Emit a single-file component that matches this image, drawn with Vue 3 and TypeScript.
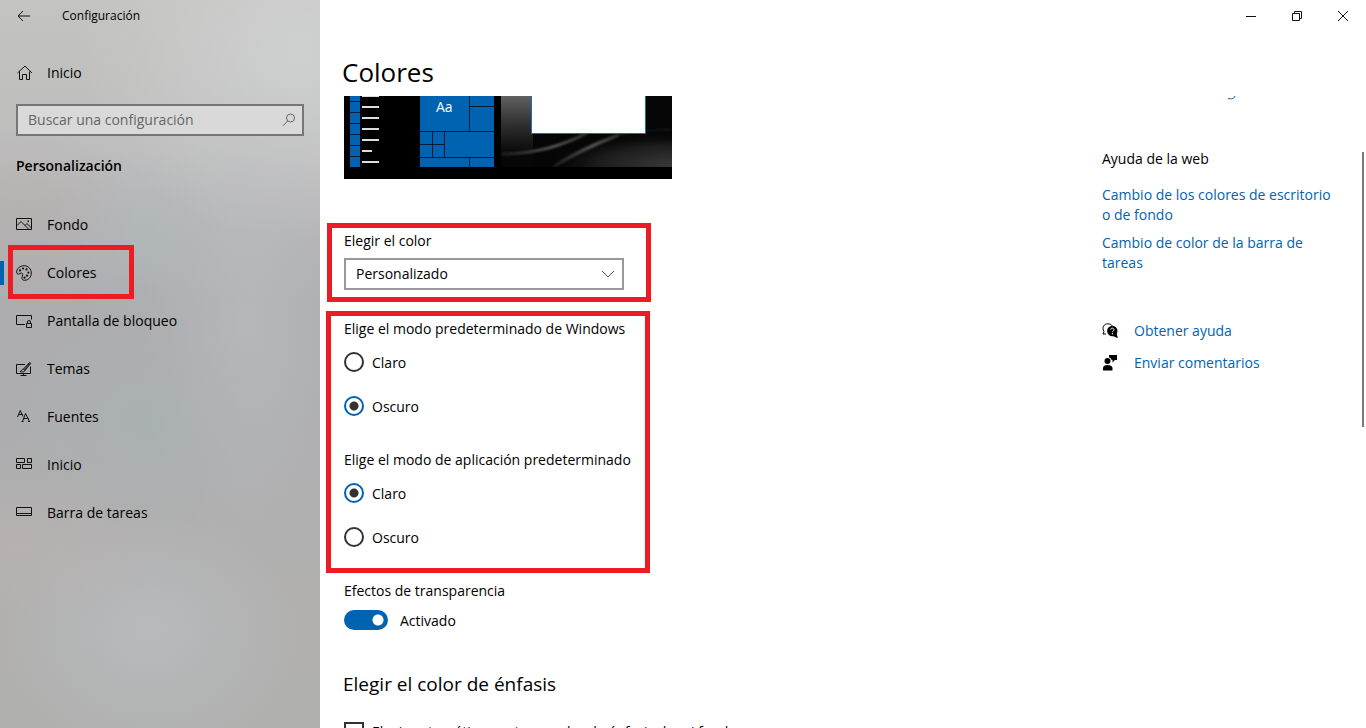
<script setup lang="ts">
import { ref } from 'vue'

interface NavItem {
  id: string
  label: string
}

const navItems: NavItem[] = [
  { id: 'background', label: 'Fondo' },
  { id: 'colors', label: 'Colores' },
  { id: 'lock', label: 'Pantalla de bloqueo' },
  { id: 'themes', label: 'Temas' },
  { id: 'fonts', label: 'Fuentes' },
  { id: 'start', label: 'Inicio' },
  { id: 'taskbar', label: 'Barra de tareas' },
]

const active = ref('colors')
const query = ref('')
const colorMode = ref('Personalizado')
const windowsMode = ref('Oscuro')
const appMode = ref('Claro')
const modes = ['Claro', 'Oscuro']
const transparency = ref(true)
const autoAccent = ref(false)

const taskRows = [5, 16, 27, 38, 49, 60]
const menuLines = [-1, 10, 21, 32, 43, 65]
</script>

<template>
  <div class="window">
    <aside class="sidebar">
      <header class="side-title">
        <button class="back" type="button" aria-label="Atrás">
          <svg width="14" height="12" viewBox="0 0 14 12"><path d="M13 6H1M6 1L1 6l5 5" /></svg>
        </button>
        <span>Configuración</span>
      </header>

      <a class="home" href="#inicio">
        <svg width="16" height="16" viewBox="0 0 16 16">
          <path d="M1.500 8L9 1l7 7M3.500 6.500v8h3v-5h4v5h3v-8" />
        </svg>
        <span>Inicio</span>
      </a>

      <label class="search">
        <input v-model="query" type="text" placeholder="Buscar una configuración" aria-label="Buscar una configuración" />
        <svg width="14" height="14" viewBox="0 0 14 14"><circle cx="8.500" cy="5" r="4" /><path d="M5.600 8L1 12.800" /></svg>
      </label>

      <h2 class="side-heading">Personalización</h2>

      <nav>
        <a
          v-for="item in navItems"
          :key="item.id"
          class="nav-item"
          :class="{ active: active === item.id }"
          :href="'#' + item.id"
          @click.prevent="active = item.id"
        >
          <svg width="16" height="16" viewBox="0 0 16 16">
            <template v-if="item.id === 'background'">
              <path d="M.5 1.500h15v11H.5z" />
              <path d="M1 8.500l4-4 7.500 7.500M9 8.500l2-2 4.500 4.500" />
              <path class="solid" d="M11.500 3.500h1.500V5h-1.500z" />
            </template>
            <template v-else-if="item.id === 'colors'">
              <path d="M8 .7C3.800.7.7 3.600.7 7c0 1.600 1 2.300 2 2.100 1-.2 1.500-1.100 2.500-1.100 1.200 0 1.700 1 1.500 2-.2 1-.8 1.500-.8 2.700 0 1.600 1.100 2.600 2.600 2.600 4 0 6.800-3.300 6.800-7.300S12.200.7 8 .7z" />
              <g class="solid">
                <circle cx="4" cy="5.400" r="1.100" /><circle cx="7" cy="3.500" r="1.100" />
                <circle cx="10.500" cy="4.400" r="1.100" /><circle cx="12.400" cy="7.600" r="1.100" />
                <circle cx="11" cy="10.700" r="1.100" /><circle cx="8.500" cy="12.700" r="1.100" />
              </g>
            </template>
            <template v-else-if="item.id === 'lock'">
              <path d="M9 11.500H.5v-9h15V6.500" />
              <path d="M10.500 10.500h5v4h-5zM11.500 10.500V9a1.500 1.500 0 0 1 3 0v1.500" />
            </template>
            <template v-else-if="item.id === 'themes'">
              <path d="M9 3.500H.5v9h14v-7M7.500 12.500v2M4.500 14.500h6" />
              <path d="M7.500 8L13.700 1.300l1 1L9 9.500zM7.500 8C5.500 8 6 10 4 10.500c2 1 5 .5 5-1.500" />
              <path d="M8.300 8.500l5.500-6.200" />
            </template>
            <template v-else-if="item.id === 'fonts'">
              <path d="M1.500 8L4.300 1.500 7 7.500M2.500 5.500h4" />
              <path d="M6.500 12.500L9.500 4.500l4 8M7.500 9.500h5M5.500 12.500h2M12 12.500h2" />
            </template>
            <template v-else-if="item.id === 'start'">
              <path d="M.5 1.500h8v4h-8zM11.500 1.500h4v4h-4zM.5 7.500h4v4h-4zM6.500 7.500h9v4h-9z" />
            </template>
            <template v-else>
              <path d="M.5 2.500h15v8H.5zM1 8.500h14" />
            </template>
          </svg>
          <span>{{ item.label }}</span>
        </a>
      </nav>
    </aside>

    <main class="main">
      <header class="caption">
        <button type="button" aria-label="Minimizar">
          <svg width="12" height="12" viewBox="0 0 12 12"><path d="M1 6.500h10" /></svg>
        </button>
        <button type="button" aria-label="Restaurar">
          <svg width="12" height="12" viewBox="0 0 12 12"><path d="M1.500 3.500h7v7h-7zM3.500 3.500v-2h7v7h-2" /></svg>
        </button>
        <button type="button" aria-label="Cerrar">
          <svg width="12" height="12" viewBox="0 0 12 12"><path d="M1 1l10 10M11 1L1 11" /></svg>
        </button>
      </header>

      <h1>Colores</h1>

      <div class="body">
        <div class="settings">
          <svg class="preview" width="328" height="83" viewBox="0 0 328 83" role="img" aria-label="Vista previa">
            <defs>
              <linearGradient id="wall" x1="0" y1="0" x2="0" y2="1">
                <stop offset="0" stop-color="#606060" /><stop offset=".4" stop-color="#303030" /><stop offset=".8" stop-color="#080808" />
                <stop offset="1" stop-color="#060606" />
              </linearGradient>
              <radialGradient id="glow" cx="1" cy=".95" r=".9">
                <stop offset="0" stop-color="#383838" /><stop offset=".6" stop-color="#1c1c1c" /><stop offset="1" stop-color="#080808" stop-opacity="0" />
              </radialGradient>
              <linearGradient id="streak" x1="0" y1="0" x2="1" y2="0">
                <stop offset="0" stop-color="#1c1c1c" /><stop offset=".6" stop-color="#5a5a5a" /><stop offset="1" stop-color="#333" />
              </linearGradient>
              <filter id="soft"><feGaussianBlur stdDeviation="1" /></filter>
            </defs>
            <rect width="328" height="83" fill="#000" />
            <rect x="6" width="10" height="71" fill="#0063b1" />
            <path v-for="y in taskRows" :key="'r' + y" :d="`M6 ${y}.5h10`" stroke="#001a33" />
            <rect v-for="y in menuLines" :key="'m' + y" x="18" :y="y" width="17" height="2" fill="#ddd" />
            <rect x="18" y="54" width="10" height="2" fill="#ddd" />
            <rect x="76" width="74" height="71" fill="#0063b1" />
            <path
              d="M125.500 0v35M125 10.500h25M76 35.500h74M88.500 35v26M100.500 35v26M76 48.500h25M76 61.500h74M125.500 61v10"
              stroke="#001a33"
              fill="none"
            />
            <text x="92" y="16" class="sample">Aa</text>
            <rect x="157" width="171" height="71" fill="#050505" />
            <rect x="157" width="32" height="71" fill="url(#wall)" />
            <path d="M189 71V48l70-14h69v37z" fill="url(#glow)" />
            <g fill="none" filter="url(#soft)">
              <path d="M157 58q46 0 86-21" stroke="url(#streak)" stroke-width="3" />
              <path d="M209 71q28-18 66-32" stroke="url(#streak)" stroke-width="3" />
              <path d="M275 39q28-6 53-5" stroke="#222" />
            </g>
            <rect x="157" y="71" width="171" height="12" fill="#000" />
            <path d="M187.500 0v37.500h114V0" fill="#fff" stroke="#1b6fb5" />
          </svg>

          <section class="marked choose">
            <label class="field-label" for="color-mode">Elegir el color</label>
            <div class="select">
              <select id="color-mode" v-model="colorMode">
                <option>Claro</option>
                <option>Oscuro</option>
                <option>Personalizado</option>
              </select>
              <svg width="14" height="8" viewBox="0 0 14 8"><path d="M1 1l6 6 6-6" /></svg>
            </div>
          </section>

          <section class="marked modes">
            <fieldset>
              <legend>Elige el modo predeterminado de Windows</legend>
              <label v-for="mode in modes" :key="mode" class="radio">
                <input v-model="windowsMode" type="radio" name="windows-mode" :value="mode" />
                <span>{{ mode }}</span>
              </label>
            </fieldset>
            <fieldset>
              <legend>Elige el modo de aplicación predeterminado</legend>
              <label v-for="mode in modes" :key="mode" class="radio">
                <input v-model="appMode" type="radio" name="app-mode" :value="mode" />
                <span>{{ mode }}</span>
              </label>
            </fieldset>
          </section>

          <section class="effects">
            <label class="field-label" for="transparency">Efectos de transparencia</label>
            <div class="toggle-row">
              <input id="transparency" v-model="transparency" type="checkbox" role="switch" class="toggle" />
              <span>{{ transparency ? 'Activado' : 'Desactivado' }}</span>
            </div>
          </section>

          <section class="accent">
            <h2>Elegir el color de énfasis</h2>
            <label class="check">
              <input v-model="autoAccent" type="checkbox" />
              <span>Elegir automáticamente un color de énfasis de mi fondo</span>
            </label>
          </section>
        </div>

        <aside class="help">
          <svg class="tail" width="8" height="4" viewBox="0 0 8 4"><path d="M0 2.500c3 .8 6 .4 7-2.500" /></svg>
          <h2>Ayuda de la web</h2>
          <a href="#escritorio">Cambio de los colores de escritorio o de fondo</a>
          <a href="#barra">Cambio de color de la barra de tareas</a>
          <div class="support">
            <a href="#ayuda">
              <svg width="16" height="16" viewBox="0 0 16 16">
                <path d="M4 11H1l1-2.500C-.5 4.500 2 .8 5.800.8c2 0 3.400.7 4.400 2" fill="none" stroke="#000" />
                <circle cx="10.300" cy="8" r="5.200" />
                <path d="M11 13l4.800 2.300L14.500 10z" />
                <path d="M8.700 6.800c0-2.200 3.300-2.200 3.300 0 0 1.200-1.600 1.200-1.600 2.500M10.400 10.200v1.200" fill="none" stroke="#fff" />
              </svg>
              <span>Obtener ayuda</span>
            </a>
            <a href="#comentarios">
              <svg width="16" height="16" viewBox="0 0 16 16">
                <circle cx="5.500" cy="6" r="3" />
                <path d="M1 15.500V13C1 11 3 10 5.500 10s5 1 5 3v2.500zM7 0h8v5h-2l-2.500 2.500V5H9.500C9.300 3.600 8.400 2.600 7 2.200z" />
              </svg>
              <span>Enviar comentarios</span>
            </a>
          </div>
        </aside>
      </div>
      <div class="scroll-thumb"></div>
    </main>
  </div>
</template>

<style>
body {
  margin: 0;
}
</style>

<style scoped>
.window {
  display: grid;
  grid-template-columns: 320px 1fr;
  height: 100vh;
  overflow: hidden;
  background: #fff;
  color: #000;
  font: 14px/20px "Open Sans", "Noto Sans", sans-serif;
}
*,
*::before,
*::after {
  box-sizing: border-box;
}
h1,
h2,
fieldset,
legend {
  margin: 0;
  padding: 0;
  border: 0;
  font-weight: 400;
}
button,
input,
select {
  margin: 0;
  color: inherit;
  font: inherit;
}
a {
  color: #0063b1;
  text-decoration: none;
}
.sidebar svg,
.caption svg,
.select svg {
  flex: none;
  fill: none;
  stroke: #111;
}
.sidebar {
  background:
    radial-gradient(ellipse 130px 70px at 20px 545px, #c0b3b377, #c0b3b300),
    radial-gradient(ellipse 120px 90px at 20px 215px, #b5a8a877, #b5a8a800),
    radial-gradient(ellipse 100px 90px at 145px 240px, #a9bcc255, #a9bcc200),
    radial-gradient(ellipse 130px 110px at 145px 420px, #a4b5b266, #a4b5b200),
    radial-gradient(ellipse 150px 130px at 150px 630px, #bcc0c499, #bcc0c400),
    radial-gradient(ellipse 110px 240px at 250px 320px, #bcbec199, #bcbec100),
    radial-gradient(ellipse 220px 190px at 300px 50px, #d2d3d4cc, #d2d3d400),
    linear-gradient(#c3c3c0 0, #bdbdbd 150px, #adadaf 300px, #adadaf 430px, #b1b0af 600px, #b0b0af 100%);
}
.side-title {
  display: flex;
  align-items: center;
  height: 32px;
  font-size: 12px;
}
.side-title span {
  line-height: 34px;
}
.back {
  display: flex;
  width: 62px;
  padding: 0 0 0 17px;
  border: 0;
  background: none;
}
.home {
  display: flex;
  align-items: center;
  gap: 15px;
  height: 40px;
  margin: 21px 16px 11px;
  color: #000;
}
.search {
  display: flex;
  align-items: center;
  height: 32px;
  margin: 0 16px;
  padding: 0 6px 0 10px;
  border: 2px solid #767676;
  background: #d9d9d9;
}
.search input {
  flex: 1;
  min-width: 0;
  padding: 0;
  border: 0;
  outline: 0;
  background: none;
}
.search input::placeholder {
  color: #666;
  opacity: 1;
}
.search svg {
  stroke: #666;
}
.side-heading {
  margin: 20px 16px 25px;
  font-size: 14px;
  font-weight: 600;
}
.nav-item {
  position: relative;
  display: flex;
  align-items: center;
  gap: 15px;
  height: 48px;
  padding: 0 16px;
  color: #000;
}
.nav-item .solid {
  fill: #111;
  stroke: none;
}
.nav-item.active::before {
  content: "";
  position: absolute;
  left: 0;
  width: 4px;
  height: 24px;
  background: #0063b1;
}
/* Highlight frame over the current entry */
.nav-item.active::after {
  content: "";
  position: absolute;
  top: -4px;
  left: 8px;
  width: 126px;
  height: 54px;
  border: 5px solid #ed1c24;
}
.main {
  position: relative;
  display: flex;
  flex-direction: column;
  min-width: 0;
  min-height: 0;
}
.caption {
  display: flex;
  justify-content: flex-end;
  height: 32px;
}
.caption button {
  display: grid;
  place-items: center;
  width: 46px;
  padding: 0;
  border: 0;
  background: none;
}
h1 {
  height: 64px;
  padding-left: 22px;
  font-size: 26px;
  line-height: 80px;
}
.body {
  display: flex;
  flex: 1;
  min-height: 0;
  overflow: hidden;
}
.settings {
  flex: 1;
  min-width: 0;
}
.preview {
  display: block;
  margin: 0 0 44px 24px;
}
.sample {
  fill: #fff;
  font-size: 14px;
}
.marked {
  width: 324px;
  border: 5px solid #ed1c24;
}
.choose {
  margin: 0 0 9px 7px;
  padding: 3px 0 7px 12px;
}
.field-label {
  display: block;
}
.select {
  display: flex;
  align-items: center;
  width: 280px;
  margin-top: 7px;
}
.select select {
  width: 280px;
  height: 32px;
  padding: 0 10px;
  border: 2px solid #999;
  border-radius: 0;
  appearance: none;
  background: #fff;
}
.select svg {
  margin-left: -23px;
  pointer-events: none;
  stroke: #555;
}
.modes {
  display: grid;
  gap: 34px;
  margin-left: 6px;
  padding: 3px 0 21px 13px;
}
legend {
  margin-bottom: 13px;
  white-space: nowrap;
}
.radio {
  display: flex;
  gap: 8px;
  height: 20px;
}
.radio span,
.toggle-row span {
  line-height: 22px;
}
.radio + .radio {
  margin-top: 24px;
}
.radio input {
  width: 20px;
  height: 20px;
  border: 2px solid #333;
  border-radius: 50%;
  appearance: none;
}
.radio input:checked {
  border-color: #0063b1;
  background: radial-gradient(circle, #333 4px, #fff 5px);
}
.effects {
  margin: 8px 0 40px 24px;
}
.toggle-row {
  display: flex;
  gap: 12px;
  height: 20px;
  margin-top: 9px;
}
.toggle {
  width: 44px;
  height: 20px;
  border-radius: 10px;
  appearance: none;
  background: radial-gradient(circle at 10px 10px, #fff 5px, #767676 6px);
}
.toggle:checked {
  background: radial-gradient(circle at 34px 10px, #fff 5px, #0063b1 6px);
}
.accent {
  margin-left: 23px;
}
.accent h2 {
  margin-bottom: 24px;
  font-size: 19px;
  line-height: 28px;
}
.check {
  display: flex;
  gap: 8px;
  padding-left: 1px;
}
.check input {
  width: 20px;
  height: 20px;
  border: 2px solid #333;
  appearance: none;
}
.help {
  display: flex;
  flex: none;
  flex-direction: column;
  width: 264px;
  padding-right: 24px;
}
.help h2 {
  margin: 49px 0 16px;
  font-size: 14px;
}
.help > a {
  margin-bottom: 8px;
}
.tail {
  margin: 0 0 0 126px;
  fill: none;
  stroke: #0063b1;
}
.support {
  display: grid;
  gap: 12px;
  margin-top: 40px;
}
.support a {
  display: flex;
  align-items: center;
  gap: 16px;
}
.support svg {
  flex: none;
  fill: #000;
}
.scroll-thumb {
  position: absolute;
  top: 152px;
  right: 2px;
  width: 2px;
  height: 275px;
  background: #7a7a7a;
}
</style>
